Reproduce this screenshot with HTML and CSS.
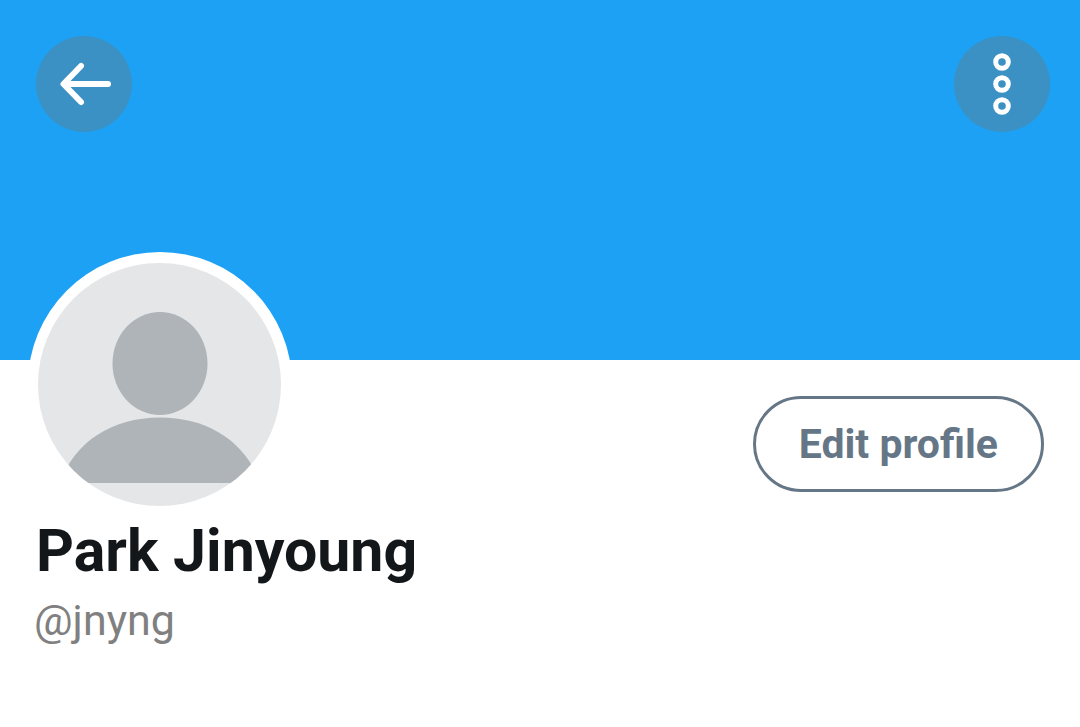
FILE: index.html
```html
<!DOCTYPE html>
<html lang="en">
<head>
<meta charset="utf-8">
<meta name="viewport" content="width=device-width, initial-scale=1">
<title>Park Jinyoung</title>
<link rel="stylesheet" href="styles.css">
</head>
<body>
<header class="banner">
  <button class="round-button" type="button" aria-label="Back">
    <svg viewBox="0 0 96 96" fill="none" stroke="#fff" stroke-width="6" stroke-linecap="round" stroke-linejoin="round"><path d="M72 48H28M45 30L27.500 48 45 66"/></svg>
  </button>
  <button class="round-button" type="button" aria-label="More options">
    <svg viewBox="0 0 96 96" fill="none" stroke="#fff" stroke-width="5"><circle cx="48" cy="26" r="6.300"/><circle cx="48" cy="48" r="6.300"/><circle cx="48" cy="70" r="6.300"/></svg>
  </button>
</header>
<main class="profile">
  <div class="profile-top">
    <svg class="avatar" viewBox="0 0 264 264" role="img" aria-label="Profile picture">
      <defs><clipPath id="face"><circle cx="131.500" cy="132.500" r="121.500"/></clipPath></defs>
      <circle cx="132" cy="132" r="132" fill="#fff"/>
      <g clip-path="url(#face)">
        <rect width="264" height="264" fill="#e4e6e8"/>
        <ellipse cx="132" cy="111.500" rx="47.500" ry="51.500" fill="#aeb4b8"/>
        <path d="M32 231C46 190 84 165.500 132 165.500S218 190 232 231Z" fill="#aeb4b8"/>
      </g>
    </svg>
    <button class="edit-button" type="button">Edit profile</button>
  </div>
  <h1 class="name">Park Jinyoung</h1>
  <p class="handle">@jnyng</p>
</main>
</body>
</html>
```
FILE: styles.css
```css
* { box-sizing: border-box; }
body { margin: 0; background: #fff; font-family: Roboto, "Liberation Sans", sans-serif; }
.banner { display: flex; justify-content: space-between; align-items: flex-start; height: 360px; padding: 36px 30px 0 36px; background: #1da1f4; }
.round-button { width: 96px; height: 96px; padding: 0; border: 0; border-radius: 50%; background: #3b91c3; }
.round-button svg { display: block; width: 96px; height: 96px; }
.profile { padding: 0 36px 72px 34px; }
.profile-top { display: flex; justify-content: space-between; align-items: flex-start; }
.avatar { display: block; width: 264px; height: 264px; margin: -108px 0 0 -6px; }
.edit-button { height: 96px; margin-top: 36px; padding: 0 43px; border: 3px solid #657786; border-radius: 48px; background: #fff; color: #657786; font: 700 41px/48px Roboto, "Liberation Sans", sans-serif; }
.name { margin: 0; padding-left: 2px; color: #14171a; font-size: 59px; line-height: 70px; font-weight: 700; }
.handle { margin: 8px 0 0; color: #808080; font-size: 43px; line-height: 52px; }
```
